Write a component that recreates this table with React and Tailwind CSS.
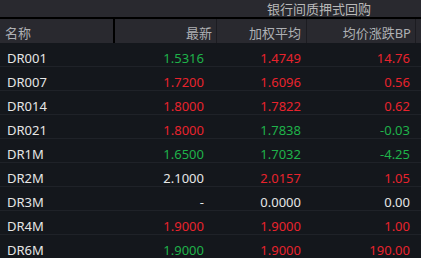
const rows = [
  { name: "DR001", last: ["1.5316", "g"], avg: ["1.4749", "r"], bp: ["14.76", "r"] },
  { name: "DR007", last: ["1.7200", "r"], avg: ["1.6096", "r"], bp: ["0.56", "r"] },
  { name: "DR014", last: ["1.8000", "r"], avg: ["1.7822", "r"], bp: ["0.62", "r"] },
  { name: "DR021", last: ["1.8000", "r"], avg: ["1.7838", "g"], bp: ["-0.03", "g"] },
  { name: "DR1M", last: ["1.6500", "g"], avg: ["1.7032", "g"], bp: ["-4.25", "g"] },
  { name: "DR2M", last: ["2.1000", "w"], avg: ["2.0157", "r"], bp: ["1.05", "r"] },
  { name: "DR3M", last: ["-", "w"], avg: ["0.0000", "w"], bp: ["0.00", "w"] },
  { name: "DR4M", last: ["1.9000", "r"], avg: ["1.9000", "r"], bp: ["1.00", "r"] },
  { name: "DR6M", last: ["1.9000", "g"], avg: ["1.9000", "r"], bp: ["190.00", "r"] },
];

const tone = {
  g: "text-[#1fb24a]",
  r: "text-[#e8232d]",
  w: "text-[#e6e6e6]",
};

export default function App() {
  return (
    <div
      className="w-[421px] h-[258px] overflow-hidden bg-[#14171c] text-[13px] leading-none"
      style={{ fontFamily: '"Noto Sans", "Noto Sans CJK SC", sans-serif' }}
    >
      {/* title bar */}
      <div className="flex h-[19px] bg-[#29292f] border-b-2 border-black">
        <div className="w-[217px]"></div>
        <div className="flex-1 flex items-center justify-center pt-[2px] text-[#b8b8b8]">银行间质押式回购</div>
      </div>

      {/* column headers */}
      <div className="flex h-[24px] bg-[#29292f] text-[#aeb0b4]">
        <div className="w-[115px] flex items-center pl-[5px] pt-[4px] border-r-2 border-black">名称</div>
        <div className="w-[102px] flex items-center justify-end pr-[4px] pt-[4px] border-r border-[#1c1c21]">最新</div>
        <div className="w-[90px] flex items-center justify-end pr-[5px] pt-[4px] border-r border-[#1c1c21]">加权平均</div>
        <div className="w-[109px] flex items-center justify-end pr-[4px] pt-[4px] border-r border-[#1c1c21]">均价涨跌BP</div>
        <div className="flex-1"></div>
      </div>

      {/* body */}
      <div className="flex flex-col">
        {rows.map((r) => (
          <div key={r.name} className="flex h-[24px] pt-[8px] border-b border-[#1f2228]">
            <div className="w-[116px] flex items-center pl-[7px] text-[#e6e6e6]">{r.name}</div>
            <div className={`w-[102px] flex items-center justify-end pr-[14px] ${tone[r.last[1]]}`}>{r.last[0]}</div>
            <div className={`w-[90px] flex items-center justify-end pr-[7px] ${tone[r.avg[1]]}`}>{r.avg[0]}</div>
            <div className={`w-[109px] flex items-center justify-end pr-[7px] ${tone[r.bp[1]]}`}>{r.bp[0]}</div>
          </div>
        ))}
      </div>
    </div>
  );
}
